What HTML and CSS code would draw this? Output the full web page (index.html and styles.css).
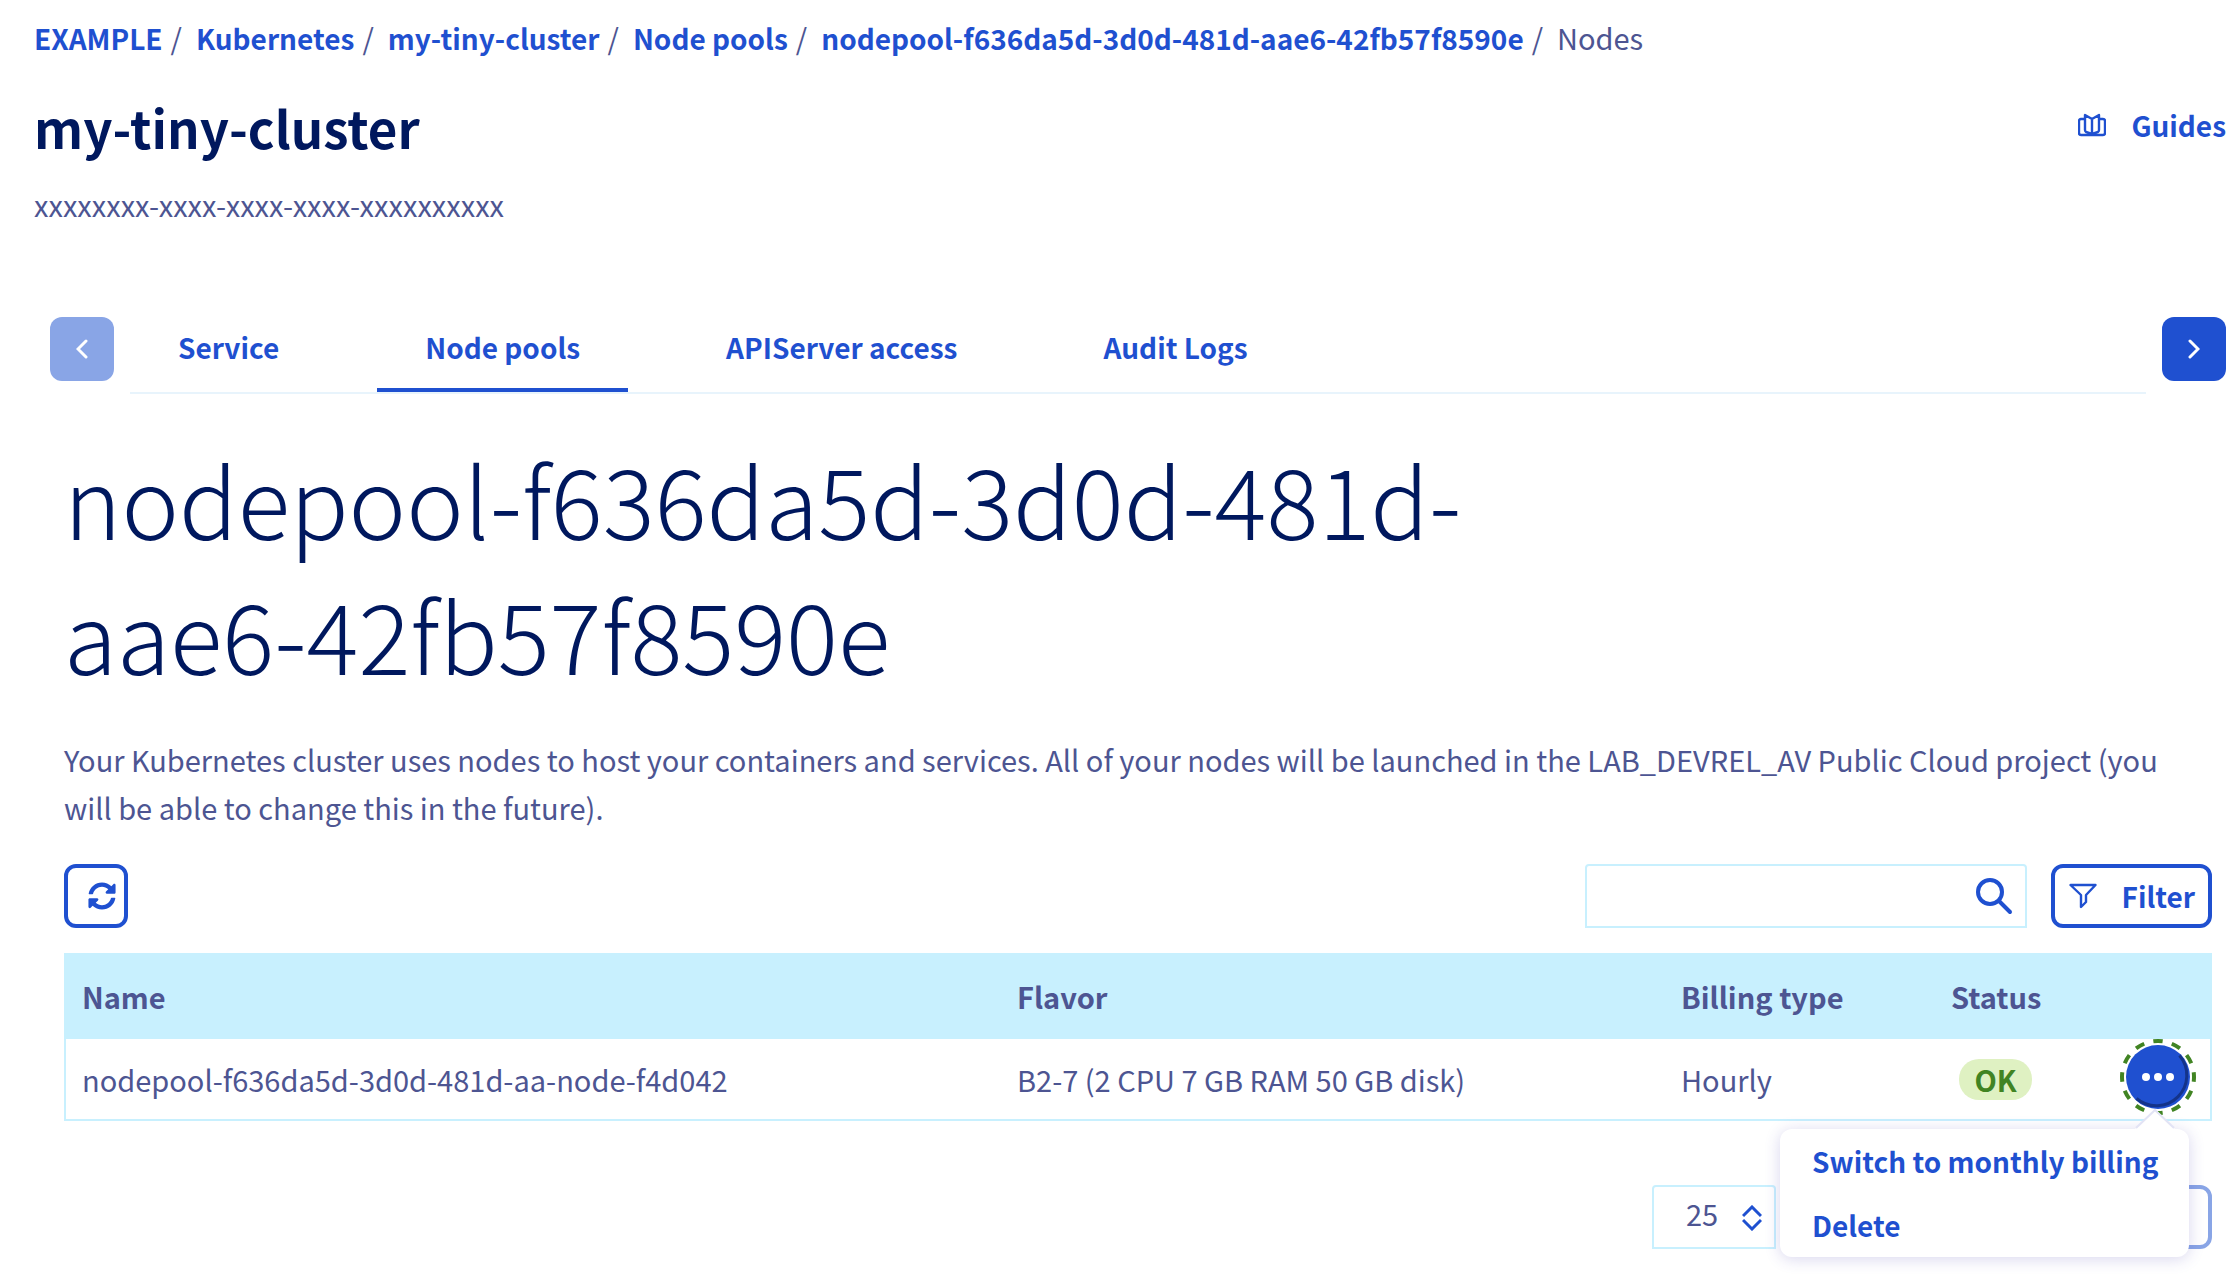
FILE: index.html
```html
<!DOCTYPE html>
<html lang="en">
<head>
<meta charset="utf-8">
<title>my-tiny-cluster - Nodes</title>
<link rel="stylesheet" href="styles.css">
</head>
<body>
<header class="page-header">
  <nav aria-label="Breadcrumb">
    <ol class="breadcrumb">
      <li><a href="#">EXAMPLE</a></li>
      <li><a href="#">Kubernetes</a></li>
      <li><a href="#">my-tiny-cluster</a></li>
      <li><a href="#">Node pools</a></li>
      <li><a href="#">nodepool-f636da5d-3d0d-481d-aae6-42fb57f8590e</a></li>
      <li aria-current="page">Nodes</li>
    </ol>
  </nav>
  <div class="title-row">
    <h1>my-tiny-cluster</h1>
    <a class="guides" href="#">
      <svg width="28" height="24" viewBox="0 0 28 24" fill="none" stroke="currentColor" stroke-width="2.400" stroke-linejoin="round" aria-hidden="true">
        <path d="M6 6H3Q1 6 1 8V20Q1 22 3 22H25Q27 22 27 20V8Q27 6 25 6H22"/>
        <path d="M14 6 7 2V17Q7 18 8 19L14 21 20 19Q21 18 21 17V2ZM14 6V21"/>
      </svg>
      <span>Guides</span>
    </a>
  </div>
  <p class="cluster-id">xxxxxxxx-xxxx-xxxx-xxxx-xxxxxxxxxx</p>
</header>

<nav class="tabs" aria-label="Cluster sections">
  <button class="scroll-button" type="button" aria-label="Previous tabs" disabled>
    <svg width="12" height="20" viewBox="0 0 12 20" aria-hidden="true"><path d="M10 2 2 10l8 8"/></svg>
  </button>
  <ul class="tab-list">
    <li><a class="tab" href="#">Service</a></li>
    <li><a class="tab tab-active" href="#" aria-current="true">Node pools</a></li>
    <li><a class="tab" href="#">APIServer access</a></li>
    <li><a class="tab" href="#">Audit Logs</a></li>
  </ul>
  <button class="scroll-button" type="button" aria-label="Next tabs">
    <svg width="12" height="20" viewBox="0 0 12 20" aria-hidden="true"><path d="m2 2 8 8-8 8"/></svg>
  </button>
</nav>

<main class="content">
  <h2>nodepool-f636da5d-3d0d-481d-aae6-42fb57f8590e</h2>
  <p class="intro">Your Kubernetes cluster uses nodes to host your containers and services. All of your nodes will be launched in the LAB_DEVREL_AV Public Cloud project (you will be able to change this in the future).</p>

  <div class="toolbar">
    <button class="outline-button refresh" type="button" aria-label="Refresh">
      <svg width="28" height="28" viewBox="0 0 512 512" fill="currentColor" aria-hidden="true"><path d="M370.720 133.280C339.458 104.008 298.888 87.962 255.848 88c-77.458.068-144.328 53.178-162.791 126.850-1.344 5.363-6.122 9.150-11.651 9.150H24.103c-7.498 0-13.194-6.807-11.807-14.176C33.933 94.924 134.813 8 256 8c66.448 0 126.791 26.136 171.315 68.685L463.030 40.970C478.149 25.851 504 36.559 504 57.941V192c0 13.255-10.745 24-24 24H345.941c-21.382 0-32.090-25.851-16.971-40.971l41.750-41.749zM32 296h134.059c21.382 0 32.090 25.851 16.971 40.971l-41.750 41.750c31.262 29.273 71.835 45.319 114.876 45.280 77.418-.070 144.315-53.144 162.787-126.849 1.344-5.363 6.122-9.150 11.651-9.150h57.304c7.498 0 13.194 6.807 11.807 14.176C478.067 417.076 377.187 504 256 504c-66.448 0-126.791-26.136-171.315-68.685L48.970 471.030C33.851 486.149 8 475.441 8 454.059V320c0-13.255 10.745-24 24-24z"/></svg>
    </button>
    <form class="search" role="search">
      <input type="search" aria-label="Search nodes">
      <button type="button" aria-label="Search">
        <svg width="38" height="38" viewBox="0 0 38 38" fill="none" stroke="currentColor" stroke-width="4" stroke-linecap="round" aria-hidden="true"><circle cx="15" cy="15" r="12"/><path d="m24 24 11 11"/></svg>
      </button>
    </form>
    <button class="outline-button filter" type="button">
      <svg width="28" height="26" viewBox="0 0 28 26" fill="none" stroke="currentColor" stroke-width="2.400" stroke-linejoin="round" aria-hidden="true"><path d="M1.500 2H26.500L17 12V19L12 24V12Z"/></svg>
      <span>Filter</span>
    </button>
  </div>

  <table class="nodes">
    <thead>
      <tr>
        <th class="col-name" scope="col">Name</th>
        <th class="col-flavor" scope="col">Flavor</th>
        <th class="col-billing" scope="col">Billing type</th>
        <th class="col-status" scope="col">Status</th>
        <td class="col-actions"></td>
      </tr>
    </thead>
    <tbody>
      <tr>
        <td>nodepool-f636da5d-3d0d-481d-aa-node-f4d042</td>
        <td>B2-7 (2 CPU 7 GB RAM 50 GB disk)</td>
        <td>Hourly</td>
        <td><span class="badge">OK</span></td>
        <td class="actions">
          <div class="action-menu">
            <button class="menu-trigger" type="button" aria-label="Actions" aria-expanded="true">
              <svg width="76" height="76" viewBox="0 0 76 76" aria-hidden="true">
                <circle class="ring" cx="38" cy="38" r="36" pathLength="240"/>
                <circle class="disc" cx="38" cy="38" r="32"/>
                <path class="shade" d="M59.500 16.500A30.500 30.500 0 0 1 16.500 59.500"/>
                <g class="dots"><circle cx="26" cy="38" r="4"/><circle cx="38" cy="38" r="4"/><circle cx="50" cy="38" r="4"/></g>
              </svg>
            </button>
            <div class="popover">
              <svg class="popover-arrow" width="40" height="20" viewBox="0 0 40 20" aria-hidden="true"><path class="arrow-fill" d="M0 20 20 0 40 20Z"/><path class="arrow-edge" d="M1 19 20 1l19 18"/></svg>
              <button type="button">Switch to monthly billing</button>
              <button type="button">Delete</button>
            </div>
          </div>
        </td>
      </tr>
    </tbody>
  </table>

  <div class="pagination">
    <div class="page-size">
      <select aria-label="Rows per page"><option>25</option></select>
      <svg width="20" height="26" viewBox="0 0 20 26" fill="none" stroke="currentColor" stroke-width="3" aria-hidden="true"><path d="m1 11 9-9 9 9M1 15l9 9 9-9"/></svg>
    </div>
    <button class="outline-button" type="button" aria-label="Next page" disabled></button>
  </div>
</main>
</body>
</html>
```

FILE: styles.css
```css
:root {
  --blue: #1f50d0;
  --blue-muted: #89a5e6;
  --navy: #00185e;
  --text: #4d5592;
  --cyan: #c8f0fe;
}

* {
  box-sizing: border-box;
}

body {
  min-height: 100vh;
  margin: 0;
  color: var(--text);
  background: #fff;
  font-family: "Noto Sans CJK SC", "Noto Sans", sans-serif;
  font-size: 29px;
  line-height: 48px;
}

button,
input,
select {
  color: inherit;
  font: inherit;
}

button {
  padding: 0;
  border: 0;
  background: none;
  cursor: pointer;
}

svg {
  display: block;
  flex: none;
}

a {
  color: var(--blue);
  font-size: 28px;
  font-weight: 700;
  text-decoration: none;
}

.page-header {
  padding: 13px 10px 0 34px;
}

.breadcrumb {
  display: flex;
  margin: 0;
  padding: 0;
  list-style: none;
}

.breadcrumb li + li::before {
  content: "/";
  padding: 0 14px 0 8px;
}

.title-row {
  display: flex;
  align-items: flex-start;
  justify-content: space-between;
  margin-top: 29px;
}

h1,
h2 {
  margin: 0;
  color: var(--navy);
}

h1 {
  font-size: 51px;
  font-weight: 700;
  line-height: 72px;
}

.guides {
  display: flex;
  align-items: center;
  gap: 25px;
  padding-top: 10px;
}

.cluster-id {
  margin: 17px 0 0;
}

.tabs {
  display: flex;
  gap: 16px;
  padding: 89px 10px 0 50px;
}

.scroll-button {
  display: grid;
  place-items: center;
  flex: none;
  width: 64px;
  height: 64px;
  border-radius: 12px;
  background: var(--blue);
}

.scroll-button:disabled {
  background: var(--blue-muted);
}

.scroll-button path {
  fill: none;
  stroke: #fff;
  stroke-width: 3;
  stroke-linecap: round;
}

.tab-list {
  display: flex;
  flex: 1;
  gap: 50px;
  margin: 0;
  padding: 0;
  border-bottom: 2px solid #e8f4fc;
  list-style: none;
}

.tab {
  display: block;
  padding: 6px 48px 17px;
  border-bottom: 4px solid transparent;
}

.tab-active {
  border-color: var(--blue);
}

.content {
  padding: 36px 24px 29px 64px;
}

h2 {
  max-width: 75%;
  font-size: 97px;
  font-weight: 300;
  line-height: 135px;
}

.intro {
  margin: 35px 0 0;
  padding-right: 32px;
}

.toolbar {
  display: flex;
  gap: 24px;
  margin-top: 33px;
}

.outline-button {
  display: flex;
  align-items: center;
  justify-content: center;
  width: 64px;
  height: 64px;
  border: 4px solid var(--blue);
  border-radius: 12px;
  color: var(--blue);
  font-size: 28px;
  font-weight: 700;
}

.outline-button:disabled {
  border-color: var(--blue-muted);
}

.refresh {
  margin-right: auto;
  padding-left: 12px;
}

.filter {
  gap: 25px;
  width: auto;
  padding: 0 13px 0 14px;
}

.search {
  display: flex;
  width: 442px;
  height: 64px;
  border: 2px solid var(--cyan);
  border-radius: 4px 4px 0 0;
}

.search input {
  flex: 1;
  min-width: 0;
  padding: 0 16px;
  border: 0;
  background: none;
}

.search button {
  padding: 0 12px;
  color: var(--blue);
}

.nodes {
  width: 100%;
  margin-top: 25px;
  border-bottom: 2px solid var(--cyan);
  border-spacing: 0;
  box-shadow: inset 2px 0 var(--cyan), inset -2px 0 var(--cyan);
  table-layout: fixed;
}

.nodes thead {
  background: var(--cyan);
}

.nodes th,
.nodes td {
  padding: 0 18px;
  text-align: left;
}

.nodes th {
  height: 86px;
  font-weight: 700;
}

.nodes tbody td {
  height: 80px;
}

.col-name {
  width: 935px;
}

.col-billing {
  width: 270px;
}

.col-status {
  width: 168px;
}

.col-actions {
  width: 111px;
}

.nodes .actions {
  padding: 0 16px 4px 19px;
}

.badge {
  display: block;
  width: 73px;
  margin-left: 8px;
  border-radius: 20px;
  background: #dff1c2;
  color: #418423;
  font-weight: 700;
  line-height: 41px;
  text-align: center;
}

.action-menu {
  position: relative;
  width: 76px;
}

.menu-trigger {
  display: block;
}

.ring {
  fill: none;
  stroke: #418423;
  stroke-width: 4;
  stroke-dasharray: 10;
  stroke-dashoffset: 5;
}

.disc {
  fill: var(--blue);
}

.shade {
  fill: none;
  stroke: #143389;
  stroke-width: 3;
}

.dots {
  fill: #fff;
}

.popover {
  position: absolute;
  z-index: 1;
  top: 90px;
  right: 7px;
  width: 409px;
  padding: 8px 32px;
  border-radius: 12px;
  background: #fff;
  box-shadow: 0 2px 16px rgba(60, 50, 170, 0.2);
}

.popover-arrow {
  position: absolute;
  right: 14px;
  bottom: 100%;
}

.arrow-fill {
  fill: #fff;
}

.arrow-edge {
  fill: none;
  stroke: #e2e3f5;
  stroke-width: 2;
}

.popover button {
  display: block;
  padding: 0 0 16px;
  color: var(--blue);
  font-size: 28px;
  font-weight: 700;
  white-space: nowrap;
}

.popover button:last-child {
  padding: 0;
}

.pagination {
  display: flex;
  justify-content: space-between;
  margin: 64px 0 0 auto;
  width: 560px;
}

.page-size {
  position: relative;
  width: 124px;
  height: 64px;
}

.page-size select {
  width: 100%;
  height: 100%;
  padding: 0 0 8px 32px;
  border: 2px solid var(--cyan);
  border-radius: 4px 4px 0 0;
  background: none;
  appearance: none;
}

.page-size svg {
  position: absolute;
  top: 20px;
  right: 14px;
  color: var(--blue);
  pointer-events: none;
}
```
